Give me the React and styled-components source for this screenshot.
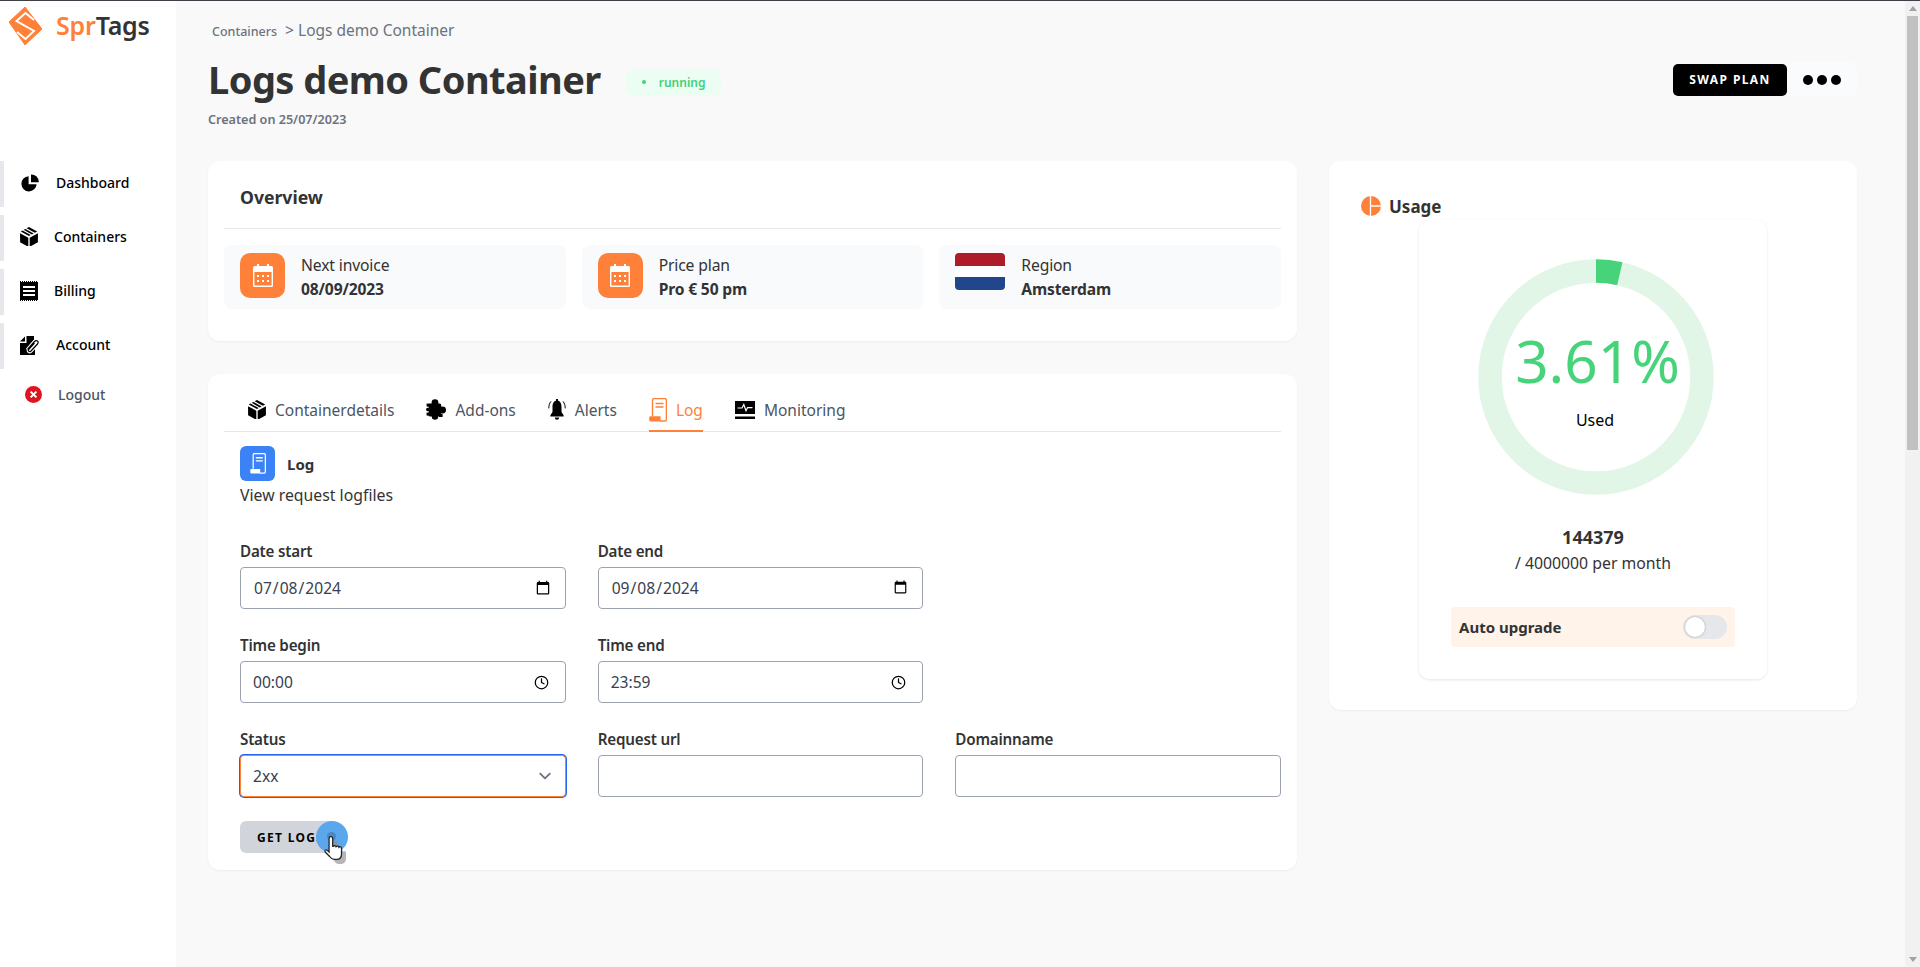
import React from 'react';
import styled, { createGlobalStyle } from 'styled-components';
import { Clock } from 'lucide-react';

const GlobalStyle = createGlobalStyle`
  * {
    box-sizing: border-box;
  }
  html,
  body {
    margin: 0;
    height: 100%;
    overflow: hidden;
  }
  body {
    font-family: 'Noto Sans', 'Open Sans', sans-serif;
    color: #333;
    background: #f9f9f9;
  }
`;

const Page = styled.div`
  display: flex;
  height: 100vh;
  border-top: 1px solid #3d4047;
`;

const Sidebar = styled.aside`
  flex: 0 0 176px;
  background: #fff;
`;

const Brand = styled.div`
  display: flex;
  align-items: flex-start;
  gap: 14px;
  height: 160px;
  padding: 6px 0 0 9px;
`;

const BrandName = styled.span`
  font-size: 25px;
  line-height: 36px;
  font-weight: 600;
  letter-spacing: -0.2px;
  color: #333;
  & b {
    font-weight: 600;
    color: #ff8139;
  }
`;

const Nav = styled.nav`
  display: flex;
  flex-direction: column;
  gap: 8px;
`;

const NavItem = styled.a`
  display: flex;
  align-items: center;
  height: ${props => (props.$plain ? '36px' : '46px')};
  padding: 0 0 ${props => (props.$plain ? '2px' : '3px')} ${props => props.$inset}px;
  gap: ${props => props.$gap}px;
  font-size: 14px;
  font-weight: 500;
  color: ${props => (props.$plain ? '#4b5563' : '#000')};
  border-left: 4px solid ${props => (props.$plain ? 'transparent' : '#e5e7eb')};
`;

const Main = styled.main`
  flex: 1;
  min-width: 0;
  padding: 0 48px 0 32px;
`;

const Breadcrumb = styled.div`
  display: flex;
  align-items: baseline;
  gap: 8px;
  height: 48px;
  padding: 18px 0 0 4px;
  color: #6b7280;
  font-size: 12.5px;
  font-weight: 500;
  & span {
    font-size: 15.5px;
    font-weight: 400;
  }
`;

const Header = styled.header`
  display: flex;
  justify-content: space-between;
  align-items: flex-start;
  height: 112px;
`;

const TitleRow = styled.div`
  display: flex;
  align-items: center;
  gap: 25px;
`;

const Title = styled.h1`
  margin: 0;
  font-size: 38px;
  line-height: 60px;
  font-weight: 700;
  letter-spacing: -0.55px;
  color: #333;
`;

const Badge = styled.span`
  display: flex;
  align-items: center;
  gap: 13px;
  height: 27px;
  padding: 0 16px;
  margin-top: 6px;
  border-radius: 8px;
  background: #ecfdf3;
  color: #42d177;
  font-size: 12px;
  font-weight: 600;
  &::before {
    content: '';
    width: 4px;
    height: 4px;
    border-radius: 50%;
    background: #42d177;
  }
`;

const Created = styled.div`
  margin-top: 2px;
  font-size: 12.6px;
  font-weight: 600;
  color: #6b7280;
`;

const Actions = styled.div`
  display: flex;
  align-items: center;
  padding-top: 13px;
`;

const SwapButton = styled.button`
  height: 32px;
  width: 114px;
  border: 0;
  border-radius: 5px;
  background: #000;
  color: #fff;
  font-family: inherit;
  font-size: 12px;
  font-weight: 700;
  letter-spacing: 1.4px;
`;

const MoreButton = styled.button`
  display: flex;
  align-items: center;
  justify-content: center;
  width: 70px;
  height: 35px;
  border: 0;
  border-radius: 6px;
  background: #fafbfc;
  padding: 0;
`;

const Columns = styled.div`
  display: grid;
  grid-template-columns: 1089px 528px;
  gap: 32px;
  align-items: start;
`;

const LeftColumn = styled.div`
  display: flex;
  flex-direction: column;
  gap: 33px;
`;

const Card = styled.section`
  background: #fff;
  border-radius: 12px;
  box-shadow: 0 1px 2px rgba(0, 0, 0, 0.05);
`;

const OverviewCard = styled(Card)`
  height: 180px;
  padding: 0 16px;
`;

const CardTitle = styled.h2`
  margin: 0;
  padding-left: 16px;
  height: 68px;
  line-height: 72px;
  font-size: 17.6px;
  font-weight: 700;
  color: #333;
  border-bottom: 1px solid #e5e7eb;
`;

const Tiles = styled.div`
  display: grid;
  grid-template-columns: repeat(3, 1fr);
  gap: 16px;
  margin-top: 16px;
`;

const Tile = styled.div`
  display: flex;
  gap: 16px;
  height: 64px;
  padding: 8px 16px;
  border-radius: 8px;
  background: #f9fafb;
`;

const TileIcon = styled.div`
  display: flex;
  align-items: center;
  justify-content: center;
  width: 45px;
  height: 45px;
  border-radius: 10px;
  background: #ff8139;
`;

const Flag = styled.div`
  width: 50px;
  height: 37px;
  border-radius: 4px;
  background: linear-gradient(#ae1c28 0 35%, #fff 35% 65%, #21468b 65% 100%);
`;

const TileLabel = styled.div`
  font-size: 15.7px;
  line-height: 24px;
  color: #333;
  letter-spacing: -0.15px;
`;

const TileValue = styled.div`
  font-size: 15.6px;
  line-height: 24px;
  font-weight: 700;
  color: #333;
  letter-spacing: -0.15px;
`;

const LogCard = styled(Card)`
  height: 496px;
  padding: 0 16px;
`;

const Tabs = styled.div`
  display: flex;
  gap: 32px;
  height: 58px;
  padding: 0 0 0 24px;
  border-bottom: 1px solid #e5e7eb;
`;

const Tab = styled.a`
  display: flex;
  align-items: center;
  gap: 9px;
  padding-top: 15px;
  margin-bottom: -1px;
  font-size: 15.5px;
  color: ${props => (props.$active ? '#ff8139' : '#4b5563')};
  border-bottom: 2px solid ${props => (props.$active ? '#ff8139' : 'transparent')};
  & svg {
    color: ${props => (props.$active ? '#ff8139' : '#000')};
  }
`;

const SectionHead = styled.div`
  display: flex;
  align-items: center;
  gap: 12px;
  margin: 14px 0 0 16px;
  font-size: 15px;
  font-weight: 700;
  color: #333;
`;

const SectionIcon = styled.div`
  display: flex;
  align-items: center;
  justify-content: center;
  width: 35px;
  height: 35px;
  border-radius: 6px;
  background: #3b82f6;
  color: #fff;
`;

const SectionText = styled.p`
  margin: 2px 0 0 16px;
  font-size: 15.8px;
  line-height: 24px;
  color: #333;
`;

const FormGrid = styled.div`
  display: grid;
  grid-template-columns: repeat(3, 1fr);
  column-gap: 32px;
  row-gap: 25px;
  margin: 33px 0 0 16px;
`;

const Field = styled.label`
  display: flex;
  flex-direction: column;
  grid-column: ${props => (props.$newRow ? 1 : 'auto')};
  font-size: 15.2px;
  line-height: 23px;
  font-weight: 600;
  letter-spacing: -0.2px;
  color: #333;
`;

const Input = styled.input`
  display: block;
  width: 100%;
  height: 42px;
  margin-top: 4px;
  padding: 0 12px;
  border: 1px solid #9ca3af;
  border-radius: 4px;
  background: #fff;
  font-family: inherit;
  font-size: 15.6px;
  letter-spacing: 0;
  color: #374151;
  outline: none;
`;

const Select = styled.select`
  width: 100%;
  height: 42px;
  margin-top: 4px;
  padding: 0 12px;
  appearance: none;
  border: 1px solid #ff8139;
  border-radius: 4px;
  box-shadow: 0 0 0 1px #2563eb;
  background: #fff
    url("data:image/svg+xml,%3Csvg xmlns='http://www.w3.org/2000/svg' viewBox='0 0 20 20' fill='none'%3E%3Cpath stroke='%236b7280' stroke-linecap='round' stroke-linejoin='round' stroke-width='1.5' d='M6 8l4 4 4-4'/%3E%3C/svg%3E")
    no-repeat right 8px center / 24px;
  font-family: inherit;
  font-size: 15.6px;
  letter-spacing: 0;
  color: #374151;
  outline: none;
`;

const TimeBox = styled.span`
  position: relative;
  display: block;
  & svg {
    position: absolute;
    right: 17px;
    top: 18px;
    color: #000;
  }
`;

const ButtonWrap = styled.div`
  position: relative;
  width: 97px;
  margin: 24px 0 0 16px;
`;

const LogsButton = styled.button`
  width: 100%;
  height: 32px;
  padding: 0 0 0 17px;
  border: 0;
  border-radius: 6px;
  background: #d1d5db;
  color: #000;
  font-family: inherit;
  font-size: 12px;
  font-weight: 700;
  letter-spacing: 1.3px;
  text-align: left;
  white-space: nowrap;
  overflow: hidden;
`;

const ClickHalo = styled.span`
  position: absolute;
  left: 76px;
  top: 0;
  width: 32px;
  height: 32px;
  border-radius: 50%;
  background: #5aa7ee;
  &::after {
    content: '';
    position: absolute;
    left: 11px;
    top: 11px;
    width: 9px;
    height: 9px;
    border-radius: 50%;
    background: #4b89c0;
  }
`;

const Pointer = styled.svg`
  position: absolute;
  left: 82px;
  top: 14px;
`;

const UsageCard = styled(Card)`
  height: 549px;
  padding: 0 32px;
`;

const UsageTitle = styled.h2`
  display: flex;
  align-items: center;
  gap: 8px;
  height: 59px;
  margin: 0;
  padding-top: 31px;
  font-size: 17px;
  font-weight: 700;
  color: #333;
`;

const UsagePanel = styled.div`
  display: flex;
  flex-direction: column;
  align-items: center;
  width: 348px;
  height: 459px;
  margin-left: 58px;
  padding-top: 39px;
  border-radius: 10px;
  background: #fff;
  box-shadow: 0 1px 3px rgba(0, 0, 0, 0.1);
`;

const Ring = styled.div`
  position: relative;
  width: 236px;
  height: 236px;
  margin-left: 6px;
`;

const RingLabel = styled.div`
  position: absolute;
  inset: 0;
  display: flex;
  flex-direction: column;
  align-items: center;
  padding-top: 66px;
`;

const Percent = styled.div`
  margin-left: 3px;
  font-size: 58.5px;
  line-height: 70px;
  font-weight: 400;
  color: #47d37a;
`;

const Used = styled.div`
  margin: 13px 2px 0 0;
  font-size: 16px;
  line-height: 24px;
  color: #000;
`;

const Amount = styled.div`
  margin-top: 30px;
  font-size: 18px;
  line-height: 24px;
  font-weight: 700;
  color: #333;
`;

const Limit = styled.div`
  margin-top: 2px;
  font-size: 15.8px;
  line-height: 24px;
  color: #333;
`;

const Upgrade = styled.div`
  display: flex;
  align-items: center;
  justify-content: space-between;
  width: 284px;
  height: 40px;
  margin-top: 32px;
  padding: 0 8px;
  border-radius: 4px;
  background: #fff3ea;
  font-size: 15px;
  font-weight: 700;
  color: #333;
`;

const Toggle = styled.span`
  position: relative;
  width: 44px;
  height: 24px;
  border-radius: 12px;
  background: #e5e7eb;
  &::after {
    content: '';
    position: absolute;
    left: 2px;
    top: 2px;
    width: 20px;
    height: 20px;
    border-radius: 50%;
    background: #fff;
    box-shadow: 0 0 2px rgba(0, 0, 0, 0.35);
  }
`;

const ScrollRail = styled.div`
  display: flex;
  flex-direction: column;
  flex: 0 0 15px;
  background: #f1f1f1;
`;

const ScrollArrow = styled.div`
  flex: 0 0 15px;
  display: flex;
  align-items: center;
  justify-content: center;
  &::before {
    content: '';
    border-left: 4px solid transparent;
    border-right: 4px solid transparent;
    border-${props => (props.$down ? 'top' : 'bottom')}: 5px solid #a3a3a3;
  }
`;

const ScrollThumb = styled.div`
  height: 434px;
  margin: 0 2px;
  background: #c1c1c1;
`;

const ScrollSpace = styled.div`
  flex: 1;
`;

const PieIcon = () => (
  <svg width="18" height="18" viewBox="0 0 18 18" fill="#000">
    <path d="M7.6 2.2A7.6 7.6 0 1 0 15.6 10.2H7.6Z" />
    <path d="M10 0.4A7.6 7.6 0 0 1 17.8 8.2H10Z" />
  </svg>
);

const BoxIcon = ({ size = 18 }) => (
  <svg width={size} height={size * 1.1} viewBox="0 0 18 20" fill="#000">
    <path d="M0 6.2 8.3 10.8V20L0 15.4Z" />
    <path d="M9.7 10.8 18 6.2V15.4L9.7 20Z" />
    <path d="M6.6 1.3 9 0 17.3 4.6 14.9 5.9Z" />
    <path d="M3.6 2.9 5.4 1.9 13.7 6.6 11.9 7.6Z" />
    <path d="M0.7 4.6 2.4 3.6 10.7 8.2 9 9.2Z" />
  </svg>
);

const BillIcon = () => (
  <svg width="18" height="20" viewBox="0 0 18 20">
    <rect y="1" width="18" height="18" fill="#000" />
    <path d="M0 .5H18M0 19.5H18" stroke="#000" strokeDasharray="1 1" />
    <path d="M3 6H15M3 10H15M3 14H15" stroke="#fff" strokeWidth="2" />
  </svg>
);

const AccountIcon = () => (
  <svg width="20" height="20" viewBox="0 0 20 20">
    <path d="M0 6.5 5 1.5V6.5Z" fill="#000" />
    <path d="M0 8V20H15V11L9 17 6 14 14 5V1H6.5V8Z" fill="#000" />
    <path d="M7.5 14.5 14.5 6.5C16.5 4.5 19.5 6.5 17.5 9L11 16C9.5 17.5 7.5 16 8.8 14.3L14.5 8.2" fill="none" stroke="#fff" strokeWidth="3.4" />
    <path d="M7.5 14.5 14.5 6.5C16.5 4.5 19.5 6.5 17.5 9L11 16C9.5 17.5 7.5 16 8.8 14.3L14.5 8.2" fill="none" stroke="#000" strokeWidth="1.2" />
  </svg>
);

const CloseIcon = () => (
  <svg width="17" height="17" viewBox="0 0 17 17">
    <circle cx="8.5" cy="8.5" r="8.5" fill="#e0141e" />
    <path d="M5.6 5.6 11.4 11.4M11.4 5.6 5.6 11.4" stroke="#fff" strokeWidth="2" />
  </svg>
);

const CalendarIcon = () => (
  <svg width="20" height="23" viewBox="0 0 20 23" fill="#fff">
    <rect x="4" y="0" width="2" height="5" />
    <rect x="14" y="0" width="2" height="5" />
    <path d="M1.5 2H18.5A1.5 1.5 0 0 1 20 3.5V21.5A1.5 1.5 0 0 1 18.5 23H1.5A1.5 1.5 0 0 1 0 21.5V3.5A1.5 1.5 0 0 1 1.5 2ZM1.4 8V21.6H18.6V8Z" />
    {[5, 10, 15].map(x =>
      [12, 17].map(y => <rect key={`${x}-${y}`} x={x - 1} y={y - 1} width="2" height="2" />)
    )}
  </svg>
);

const PuzzleIcon = () => (
  <svg width="20" height="21" viewBox="0 0 20 21" fill="#000">
    <circle cx="9" cy="3.6" r="3.4" />
    <circle cx="16.6" cy="11" r="3.4" />
    <circle cx="9" cy="17.6" r="3.2" />
    <circle cx="1.8" cy="10.5" r="1.8" />
    <rect x="2.6" y="4.5" width="12.6" height="13" rx="1.5" />
    <rect x="0.6" y="4.6" width="3.6" height="3" />
    <rect x="0.6" y="13.6" width="3.6" height="3" />
    <rect x="13" y="15" width="3.6" height="3" />
  </svg>
);

const BellIcon = () => (
  <svg width="18" height="22" viewBox="0 0 18 22" fill="#000">
    <path d="M9 1.6C5.8 1.6 4.5 4.6 4.5 8V13L2.4 16.2V17.4H15.6V16.2L13.5 13V8C13.5 4.6 12.2 1.6 9 1.6Z" />
    <path d="M6.8 18.6H11.2A2.2 2.2 0 0 1 6.8 18.6Z" />
    <rect x="8" y="0" width="2" height="3" />
    <path d="M3 2.4C1.4 4.4 .8 6.6 .8 9.4M15 2.4C16.6 4.4 17.2 6.6 17.2 9.4" fill="none" stroke="#000" />
  </svg>
);

const LogIcon = ({ width = 18, height = 24 }) => (
  <svg width={width} height={height} viewBox="0 0 18 24" fill="none" stroke="currentColor">
    <path d="M3.5 18V2A1.5 1.5 0 0 1 5 .6H16A1.5 1.5 0 0 1 17.4 2V21.5A1.5 1.5 0 0 1 16 23H11" strokeWidth="1.4" />
    <path d="M6.5 5.5H14.5M6.5 9H14.5" strokeWidth="1.6" />
    <path d="M1.5 18.2H11.5V23.5H1.5A1.4 1.4 0 0 1 .2 22V19.5A1.4 1.4 0 0 1 1.5 18.2Z" fill="currentColor" stroke="none" />
  </svg>
);

const MonitorIcon = () => (
  <svg width="20" height="18" viewBox="0 0 20 18">
    <rect width="20" height="13" fill="#000" />
    <rect y="15.5" width="20" height="2.5" fill="#000" />
    <path d="M2.5 7H7L8.8 3.5 11 9.8 12.6 6.6H17.5" fill="none" stroke="#fff" strokeWidth="1.2" />
  </svg>
);

const UsageIcon = () => (
  <svg width="20" height="20" viewBox="0 0 20 20">
    <circle cx="10" cy="10" r="10" fill="#ff8139" />
    <path d="M9.5 0V20M9.5 10H20" stroke="#fff" strokeWidth="1.3" />
  </svg>
);

const Logo = () => (
  <svg width="33" height="38" viewBox="0 0 33 38">
    <path d="M16 0 33 22 16 38 0 15Z" fill="#ff8139" stroke="#ff8139" strokeLinejoin="round" />
    <path d="M25 13 16.5 6 7.5 14 25 24 16.5 32 8 25" fill="none" stroke="#fff" strokeWidth="2" />
  </svg>
);

const MoreDots = () => (
  <svg width="38" height="10" viewBox="0 0 38 10" fill="#000">
    <circle cx="5" cy="5" r="5" />
    <circle cx="19" cy="5" r="5" />
    <circle cx="33" cy="5" r="5" />
  </svg>
);

const handPath =
  'M6 3a1.6 1.6 0 0 1 3.2 0v7h.5a1.4 1.4 0 0 1 2.5.3 1.4 1.4 0 0 1 2.5.5 1.3 1.3 0 0 1 2.3.8v5c0 3-1.5 5-4.3 5h-2c-2 0-3-1-4-2.4L2.6 15c-.9-1.3.7-2.6 1.8-1.5L6 15Z';

const navItems = [
  { label: 'Dashboard', icon: <PieIcon />, inset: 17, gap: 17 },
  { label: 'Containers', icon: <BoxIcon />, inset: 16, gap: 16 },
  { label: 'Billing', icon: <BillIcon />, inset: 16, gap: 16 },
  { label: 'Account', icon: <AccountIcon />, inset: 16, gap: 16 },
];

const tabs = [
  { label: 'Containerdetails', icon: <BoxIcon size={18} /> },
  { label: 'Add-ons', icon: <PuzzleIcon /> },
  { label: 'Alerts', icon: <BellIcon /> },
  { label: 'Log', icon: <LogIcon />, active: true },
  { label: 'Monitoring', icon: <MonitorIcon /> },
];

export default function App() {
  return (
    <>
      <GlobalStyle />
      <Page>
        <Sidebar>
          <Brand>
            <Logo />
            <BrandName>
              <b>Spr</b>Tags
            </BrandName>
          </Brand>
          <Nav>
            {navItems.map(item => (
              <NavItem key={item.label} $inset={item.inset} $gap={item.gap}>
                {item.icon}
                {item.label}
              </NavItem>
            ))}
            <NavItem $plain $inset={21} $gap={16}>
              <CloseIcon />
              Logout
            </NavItem>
          </Nav>
        </Sidebar>

        <Main>
          <Breadcrumb>
            Containers <span>&gt; Logs demo Container</span>
          </Breadcrumb>
          <Header>
            <div>
              <TitleRow>
                <Title>Logs demo Container</Title>
                <Badge>running</Badge>
              </TitleRow>
              <Created>Created on 25/07/2023</Created>
            </div>
            <Actions>
              <SwapButton>SWAP PLAN</SwapButton>
              <MoreButton>
                <MoreDots />
              </MoreButton>
            </Actions>
          </Header>

          <Columns>
            <LeftColumn>
              <OverviewCard>
                <CardTitle>Overview</CardTitle>
                <Tiles>
                  <Tile>
                    <TileIcon>
                      <CalendarIcon />
                    </TileIcon>
                    <div>
                      <TileLabel>Next invoice</TileLabel>
                      <TileValue>08/09/2023</TileValue>
                    </div>
                  </Tile>
                  <Tile>
                    <TileIcon>
                      <CalendarIcon />
                    </TileIcon>
                    <div>
                      <TileLabel>Price plan</TileLabel>
                      <TileValue>Pro € 50 pm</TileValue>
                    </div>
                  </Tile>
                  <Tile>
                    <Flag />
                    <div>
                      <TileLabel>Region</TileLabel>
                      <TileValue>Amsterdam</TileValue>
                    </div>
                  </Tile>
                </Tiles>
              </OverviewCard>

              <LogCard>
                <Tabs>
                  {tabs.map(tab => (
                    <Tab key={tab.label} $active={tab.active}>
                      {tab.icon}
                      {tab.label}
                    </Tab>
                  ))}
                </Tabs>
                <SectionHead>
                  <SectionIcon>
                    <LogIcon width={16} height={21} />
                  </SectionIcon>
                  Log
                </SectionHead>
                <SectionText>View request logfiles</SectionText>
                <FormGrid>
                  <Field $newRow>
                    Date start
                    <Input type="date" defaultValue="2024-07-08" />
                  </Field>
                  <Field>
                    Date end
                    <Input type="date" defaultValue="2024-09-08" />
                  </Field>
                  <Field $newRow>
                    Time begin
                    <TimeBox>
                      <Input type="text" defaultValue="00:00" />
                      <Clock size={15} strokeWidth={2} />
                    </TimeBox>
                  </Field>
                  <Field>
                    Time end
                    <TimeBox>
                      <Input type="text" defaultValue="23:59" />
                      <Clock size={15} strokeWidth={2} />
                    </TimeBox>
                  </Field>
                  <Field $newRow>
                    Status
                    <Select defaultValue="2xx">
                      <option>2xx</option>
                      <option>3xx</option>
                      <option>4xx</option>
                      <option>5xx</option>
                    </Select>
                  </Field>
                  <Field>
                    Request url
                    <Input type="text" />
                  </Field>
                  <Field>
                    Domainname
                    <Input type="text" />
                  </Field>
                </FormGrid>
                <ButtonWrap>
                  <LogsButton>GET LOGS</LogsButton>
                  <ClickHalo />
                  <Pointer width="30" height="34" viewBox="0 0 26 30">
                    <path d={handPath} fill="#8f8f8f" opacity="0.65" transform="translate(4 4)" />
                    <path d={handPath} fill="#fff" stroke="#222" strokeWidth="1.1" />
                  </Pointer>
                </ButtonWrap>
              </LogCard>
            </LeftColumn>

            <UsageCard>
              <UsageTitle>
                <UsageIcon />
                Usage
              </UsageTitle>
              <UsagePanel>
                <Ring>
                  <svg width="236" height="236" viewBox="0 0 236 236" fill="none" strokeWidth="23.5">
                    <circle cx="118" cy="118" r="106" stroke="#e1f6e7" />
                    <circle
                      cx="118"
                      cy="118"
                      r="106"
                      stroke="#47d37a"
                      strokeDasharray={`${2 * Math.PI * 106 * 0.0361} 1000`}
                      transform="rotate(-90 118 118)"
                    />
                  </svg>
                  <RingLabel>
                    <Percent>3.61%</Percent>
                    <Used>Used</Used>
                  </RingLabel>
                </Ring>
                <Amount>144379</Amount>
                <Limit>/ 4000000 per month</Limit>
                <Upgrade>
                  Auto upgrade
                  <Toggle />
                </Upgrade>
              </UsagePanel>
            </UsageCard>
          </Columns>
        </Main>

        <ScrollRail>
          <ScrollArrow />
          <ScrollThumb />
          <ScrollSpace />
          <ScrollArrow $down />
        </ScrollRail>
      </Page>
    </>
  );
}
